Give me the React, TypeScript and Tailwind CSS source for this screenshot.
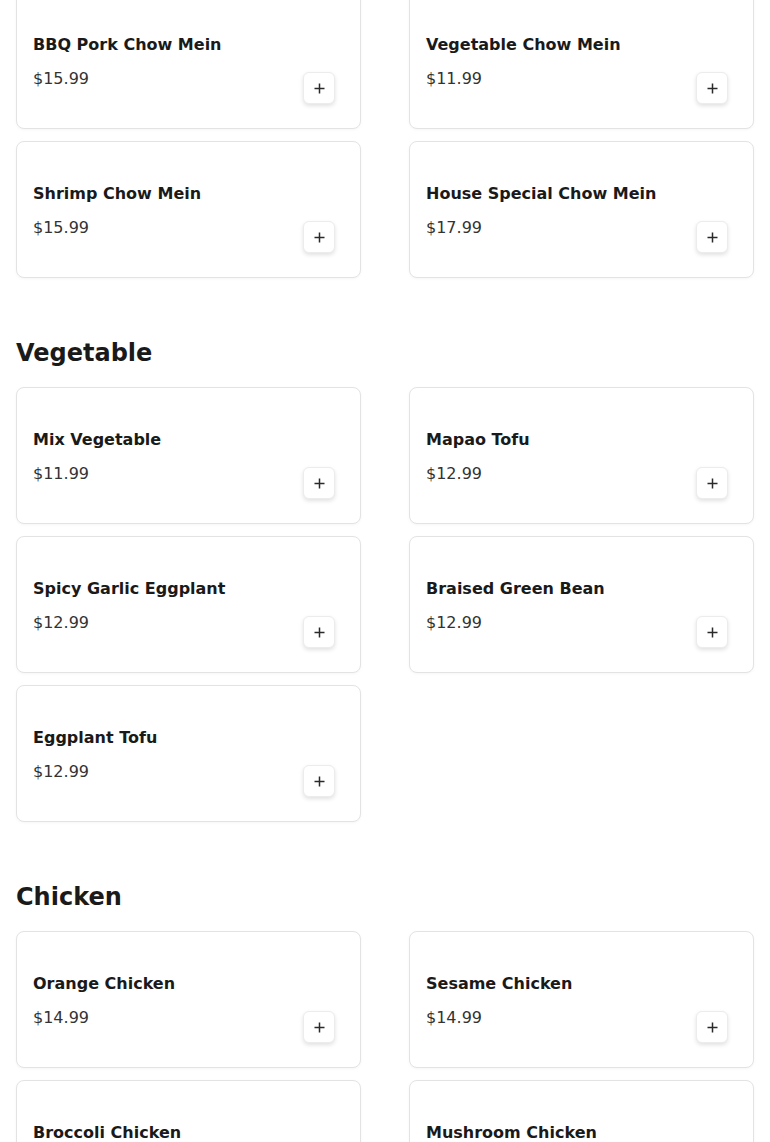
import React from 'react';

type MenuItem = { name: string; price: string };
type Section = { title: string; items: MenuItem[]; showTitle?: boolean };

const sections: Section[] = [
  {
    title: 'Chow Mein',
    showTitle: false,
    items: [
      { name: 'BBQ Pork Chow Mein', price: '$15.99' },
      { name: 'Vegetable Chow Mein', price: '$11.99' },
      { name: 'Shrimp Chow Mein', price: '$15.99' },
      { name: 'House Special Chow Mein', price: '$17.99' },
    ],
  },
  {
    title: 'Vegetable',
    items: [
      { name: 'Mix Vegetable', price: '$11.99' },
      { name: 'Mapao Tofu', price: '$12.99' },
      { name: 'Spicy Garlic Eggplant', price: '$12.99' },
      { name: 'Braised Green Bean', price: '$12.99' },
      { name: 'Eggplant Tofu', price: '$12.99' },
    ],
  },
  {
    title: 'Chicken',
    items: [
      { name: 'Orange Chicken', price: '$14.99' },
      { name: 'Sesame Chicken', price: '$14.99' },
      { name: 'Broccoli Chicken', price: '$14.99' },
      { name: 'Mushroom Chicken', price: '$14.99' },
    ],
  },
];

const MenuCard: React.FC<{ item: MenuItem }> = ({ item }) => (
  <div className="flex h-[137px] rounded-lg border border-[#e3e3e3] bg-white shadow-[0_1px_3px_rgba(0,0,0,0.04)]">
    {/* Name & price */}
    <div className="flex-1 pl-4 pt-10">
      <h3 className="text-[16px] font-bold leading-6 text-[#1a1a1a]">{item.name}</h3>
      <p className="mt-2.5 text-[16px] leading-6 text-[#333333]">{item.price}</p>
    </div>
    {/* Add button */}
    <button
      type="button"
      className="mb-6 mr-[25px] flex h-8 w-8 shrink-0 items-center justify-center self-end rounded-md border border-[#ececec] bg-white text-[#2a2a2a] shadow-[0_2px_4px_rgba(0,0,0,0.12)]"
    >
      <svg width="11" height="11" viewBox="0 0 11 11" fill="none">
        <path d="M5.5 0.5v10M0.5 5.5h10" stroke="currentColor" strokeWidth="1.5" />
      </svg>
    </button>
  </div>
);

export default function App() {
  return (
    <div className="min-h-screen bg-white px-4 pb-10 font-['DejaVu_Sans',sans-serif]">
      <div className="-mt-2">
        {sections.map((section, idx) => (
          <section key={section.title} className={idx === 0 ? '' : 'mt-[57px]'}>
            {section.showTitle !== false && (
              <h2 className="mb-4 text-[24px] font-bold leading-9 text-[#1a1a1a]">{section.title}</h2>
            )}
            <div className="grid grid-cols-2 gap-x-12 gap-y-3">
              {section.items.map((item) => (
                <MenuCard key={item.name} item={item} />
              ))}
            </div>
          </section>
        ))}
      </div>
    </div>
  );
}
